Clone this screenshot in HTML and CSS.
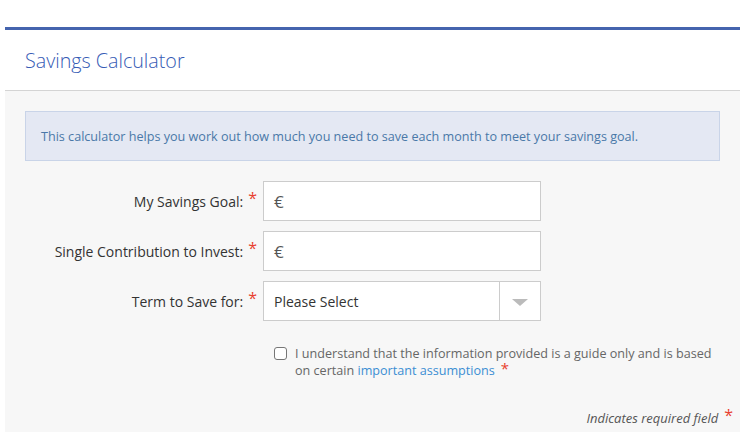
FILE: index.html
```html
<!DOCTYPE html>
<html lang="en">
<head>
<meta charset="utf-8">
<title>Savings Calculator</title>
<link rel="stylesheet" href="styles.css">
</head>
<body>
<div class="card">
  <div class="card-header">
    <h1 class="title">Savings Calculator</h1>
  </div>
  <div class="card-body">
    <div class="info">This calculator helps you work out how much you need to save each month to meet your savings goal.</div>
    <div class="form">
      <label class="label">My Savings Goal:<span class="req">*</span></label>
      <div class="field"><span class="euro">€</span></div>
      <label class="label">Single Contribution to Invest:<span class="req">*</span></label>
      <div class="field"><span class="euro">€</span></div>
      <label class="label">Term to Save for:<span class="req">*</span></label>
      <div class="field select">
        <span class="select-text">Please Select</span>
        <span class="select-btn"><span class="arrow"></span></span>
      </div>
    </div>
    <div class="agree">
      <span class="checkbox"></span>
      <p class="agree-text">I understand that the information provided is a guide only and is based on certain <a class="link" href="#">important assumptions</a><span class="req">*</span></p>
    </div>
    <div class="footnote"><em>Indicates required field</em><span class="req">*</span></div>
  </div>
</div>
</body>
</html>
```
FILE: styles.css
```css
html, body {
  margin: 0;
  padding: 0;
  background: #ffffff;
}
body {
  font-family: "Open Sans", "Liberation Sans", sans-serif;
  color: #333333;
  padding-top: 27px;
}
.card {
  margin-left: 5px;
  width: 735px;
  border-top: 3px solid #4564ae;
}
.card-header {
  height: 60px;
  border-bottom: 1px solid #d4d4d4;
  display: flex;
  align-items: center;
  padding-left: 20px;
}
.title {
  margin: 0;
  font-size: 19.7px;
  font-weight: 300;
  color: #365bb5;
}
.card-body {
  background: #f7f7f7;
  padding: 20px 20px 20px 20px;
}
.info {
  height: 48px;
  border: 1px solid #c9d4e8;
  background: #e4e8f3;
  color: #4a78a8;
  font-size: 12.6px;
  display: flex;
  align-items: center;
  padding-left: 15px;
}
.form {
  margin-top: 20px;
  display: grid;
  grid-template-columns: 238px 278px;
  grid-auto-rows: 40px;
  row-gap: 10px;
}
.label {
  display: flex;
  align-items: center;
  justify-content: flex-end;
  padding-right: 6px;
  font-size: 14px;
  color: #333333;
}
.label .req {
  margin-left: 5px;
  align-self: flex-start;
  margin-top: 9px;
}
.req {
  color: #e8402f;
  font-size: 16px;
  font-style: normal;
  line-height: 16px;
}
.field {
  box-sizing: border-box;
  border: 1px solid #cccccc;
  background: #ffffff;
  display: flex;
  align-items: center;
  padding-left: 10px;
}
.euro {
  font-size: 17px;
  color: #555555;
}
.select {
  padding-left: 10px;
}
.select-text {
  flex: 1;
  font-size: 14px;
  color: #333333;
}
.select-btn {
  width: 40px;
  height: 100%;
  border-left: 1px solid #cccccc;
  display: flex;
  align-items: center;
  justify-content: center;
}
.arrow {
  width: 0;
  height: 0;
  border-left: 8px solid transparent;
  border-right: 8px solid transparent;
  border-top: 7px solid #bbbbbb;
  margin-top: 2px;
}
.agree {
  display: flex;
  align-items: flex-start;
  margin-top: 24px;
  padding-left: 249px;
}
.checkbox {
  box-sizing: border-box;
  width: 13px;
  height: 13px;
  border: 1px solid #767676;
  border-radius: 3px;
  background: #ffffff;
  flex: none;
  margin-top: 2px;
}
.agree-text {
  margin: 0 0 0 8px;
  width: 430px;
  font-size: 12.6px;
  line-height: 17px;
  color: #666666;
}
.agree-text .req {
  font-size: 15px;
  vertical-align: top;
  margin-left: 6px;
  line-height: 12px;
}
.link {
  color: #3b8ed3;
  text-decoration: none;
}
.footnote {
  margin-top: 30px;
  margin-right: -13px;
  text-align: right;
  font-size: 13px;
  color: #555555;
}
.footnote .req {
  vertical-align: top;
  margin-left: 6px;
  line-height: 12px;
}
```
